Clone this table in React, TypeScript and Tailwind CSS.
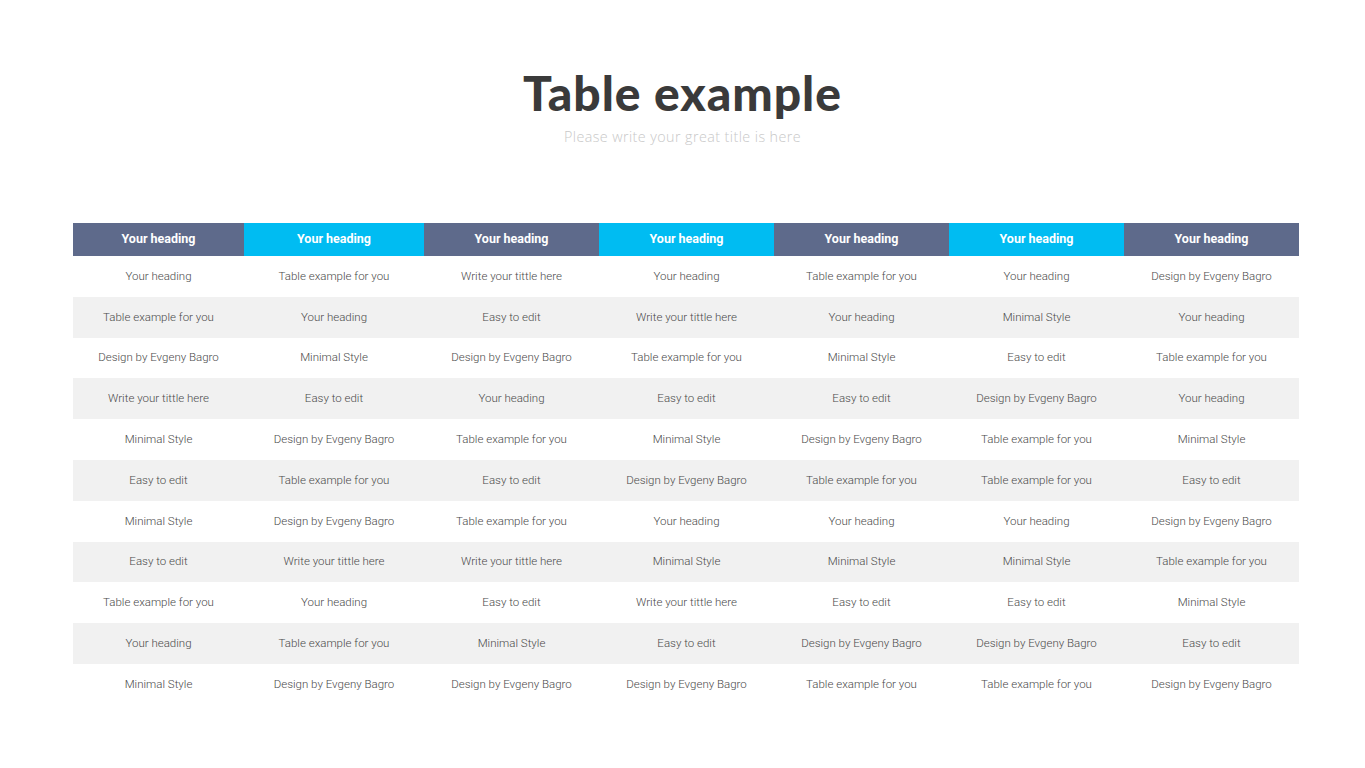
const headers = ['slate', 'cyan', 'slate', 'cyan', 'slate', 'cyan', 'slate'];

const rows: string[][] = [
  ['Your heading', 'Table example for you', 'Write your tittle here', 'Your heading', 'Table example for you', 'Your heading', 'Design by Evgeny Bagro'],
  ['Table example for you', 'Your heading', 'Easy to edit', 'Write your tittle here', 'Your heading', 'Minimal Style', 'Your heading'],
  ['Design by Evgeny Bagro', 'Minimal Style', 'Design by Evgeny Bagro', 'Table example for you', 'Minimal Style', 'Easy to edit', 'Table example for you'],
  ['Write your tittle here', 'Easy to edit', 'Your heading', 'Easy to edit', 'Easy to edit', 'Design by Evgeny Bagro', 'Your heading'],
  ['Minimal Style', 'Design by Evgeny Bagro', 'Table example for you', 'Minimal Style', 'Design by Evgeny Bagro', 'Table example for you', 'Minimal Style'],
  ['Easy to edit', 'Table example for you', 'Easy to edit', 'Design by Evgeny Bagro', 'Table example for you', 'Table example for you', 'Easy to edit'],
  ['Minimal Style', 'Design by Evgeny Bagro', 'Table example for you', 'Your heading', 'Your heading', 'Your heading', 'Design by Evgeny Bagro'],
  ['Easy to edit', 'Write your tittle here', 'Write your tittle here', 'Minimal Style', 'Minimal Style', 'Minimal Style', 'Table example for you'],
  ['Table example for you', 'Your heading', 'Easy to edit', 'Write your tittle here', 'Easy to edit', 'Easy to edit', 'Minimal Style'],
  ['Your heading', 'Table example for you', 'Minimal Style', 'Easy to edit', 'Design by Evgeny Bagro', 'Design by Evgeny Bagro', 'Easy to edit'],
  ['Minimal Style', 'Design by Evgeny Bagro', 'Design by Evgeny Bagro', 'Design by Evgeny Bagro', 'Table example for you', 'Table example for you', 'Design by Evgeny Bagro'],
];

export default function App() {
  return (
    <div className="w-[1365px] h-[768px] bg-white overflow-hidden" style={{ fontFamily: 'Roboto, sans-serif' }}>
      {/* Title */}
      <div className="pt-[64px] flex flex-col items-center">
        <h1
          className="text-[48px] leading-[58px] font-black text-[#3a3a3a] tracking-[0.02em]"
          style={{ fontFamily: 'Lato, "Open Sans", sans-serif' }}
        >
          Table example
        </h1>
        <p className="mt-[5px] text-[14.3px] leading-[20px] font-light text-[#c8c8c8] tracking-[0.03em]" style={{ fontFamily: '"Open Sans", sans-serif' }}>
          Please write your great title is here
        </p>
      </div>

      {/* Table */}
      <div className="mt-[76px] ml-[73px] w-[1226px]">
        <div className="grid grid-cols-[171px_180px_175px_175px_175px_175px_175px] h-[33px]">
          {headers.map((h, i) => (
            <div
              key={i}
              className={`flex items-center justify-center text-white text-[12.5px] font-bold ${h === 'cyan' ? 'bg-[#00bcf2]' : 'bg-[#5e6a8b]'}`}
            >
              Your heading
            </div>
          ))}
        </div>
        {rows.map((row, r) => (
          <div
            key={r}
            className={`grid grid-cols-[171px_180px_175px_175px_175px_175px_175px] h-[40.8px] ${r % 2 === 1 ? 'bg-[#f1f1f1]' : 'bg-white'}`}
          >
            {row.map((cell, c) => (
              <div key={c} className="flex items-center justify-center text-[11.5px] font-light text-[#4a4a4a]">
                {cell}
              </div>
            ))}
          </div>
        ))}
      </div>
    </div>
  );
}
